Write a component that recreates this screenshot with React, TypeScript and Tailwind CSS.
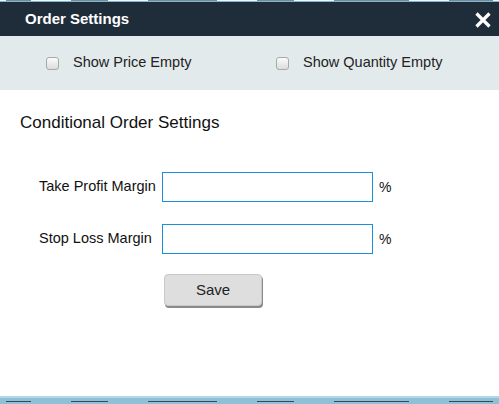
import React from "react";

// Order settings modal, shown over a trading grid whose edges peek out top and bottom.

const FONT = { fontFamily: '"Liberation Sans", Arial, sans-serif' };

function Checkbox({ label }: { label: string }) {
  return (
    <label className="flex items-center gap-[14px] text-[14.5px] text-[#222]">
      <span className="block h-[13px] w-[13px] rounded-[3px] border border-[#a9a9a9] bg-gradient-to-b from-[#fbfbfb] to-[#dcdcdc]" />
      {label}
    </label>
  );
}

function MarginRow({ label }: { label: string }) {
  return (
    <div className="flex items-center">
      <span className="w-[123px] text-[14.5px] text-[#111]">{label}</span>
      <input className="h-[30px] w-[211px] border border-[#1990d8] bg-white outline-none" />
      <span className="ml-[6px] text-[14px] text-[#111]">%</span>
    </div>
  );
}

function GridEdge({ dark }: { dark?: boolean }) {
  const cells = [40, 60, 110, 60, 120, 70];
  return (
    <div className="flex h-full items-center gap-[40px] px-[6px]">
      {cells.map((w, i) => (
        <span
          key={i}
          className={dark ? "h-[1px] bg-[#3a4a56]" : "h-[1px] bg-[#7a8a90]"}
          style={{ width: w }}
        />
      ))}
    </div>
  );
}

export default function App() {
  return (
    <div className="flex h-[404px] w-[499px] flex-col overflow-hidden bg-white" style={FONT}>
      <div className="h-[2px] border-b border-[#7fb6d6] bg-[#f2f4f5]">
        <GridEdge />
      </div>
      <div className="flex h-[34px] items-center justify-between bg-[#1f2d3b] pl-[25px] pr-[7px]">
        <span className="text-[15px] font-bold text-white">Order Settings</span>
        <svg width="18" height="18" viewBox="0 0 18 18" className="mt-[1px]">
          <path d="M2.5 2.5 L15.5 15.5 M15.5 2.5 L2.5 15.5" stroke="white" strokeWidth="3.2" strokeLinecap="butt" />
        </svg>
      </div>
      <div className="flex h-[54px] items-center bg-[#e3eaec] pl-[46px]">
        <div className="w-[230px]">
          <Checkbox label="Show Price Empty" />
        </div>
        <Checkbox label="Show Quantity Empty" />
      </div>
      <div className="flex flex-1 flex-col">
        <h2 className="ml-[20px] mt-[21px] text-[17px] leading-[24px] text-[#111]">Conditional Order Settings</h2>
        <div className="ml-[39px] mt-[37px] flex flex-col gap-[22px]">
          <MarginRow label="Take Profit Margin" />
          <MarginRow label="Stop Loss Margin" />
        </div>
        <button className="ml-[164px] mt-[20px] h-[32px] w-[98px] rounded-[4px] border border-[#c8c8c8] bg-[#dedede] text-[15px] text-[#222] shadow-[1px_2px_0_#8a8a8a]">
          Save
        </button>
      </div>
      <div className="h-[8px] border-t-2 border-[#b5d8e8] bg-[#8fc0d8]">
        <GridEdge dark />
      </div>
    </div>
  );
}
